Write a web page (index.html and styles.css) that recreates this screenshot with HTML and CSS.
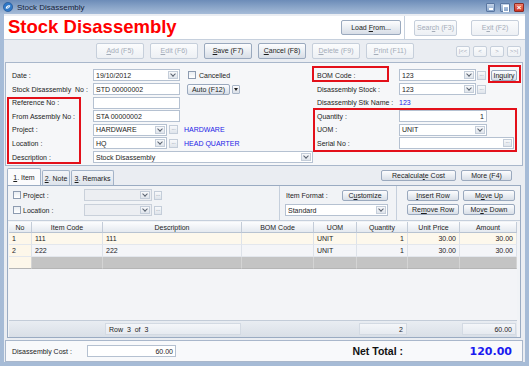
FILE: index.html
```html
<!DOCTYPE html>
<html lang="en">
<head>
    <meta charset="UTF-8">
    <title>Stock Disassembly</title>
    <link rel="stylesheet" href="styles.css">
</head>
<body>
<div class="window">
    <div class="titlebar">
        <svg class="app-icon" viewBox="0 0 10 10">
            <circle cx="5" cy="5" r="4.6" fill="#2f78c8" stroke="#1d4f8e" stroke-width="0.6"/>
            <path d="M2.6 6.4 C3.2 3 6.8 2.6 7.4 4.2 C6.2 3.6 4.4 4.2 4.2 6.2 Z" fill="#fff"/>
            <path d="M7.4 3.6 C6.8 7 3.2 7.4 2.6 5.8 C3.8 6.4 5.6 5.8 5.8 3.8 Z" fill="#cfe4fa"/>
        </svg>
        <span class="title-text">Stock Disassembly</span>
        <div class="win-btns">
            <span class="wb wb-min"></span>
            <span class="wb wb-max"></span>
            <span class="wb wb-close"></span>
        </div>
    </div>

    <div class="client">
        <header class="banner">
            <h1>Stock Disassembly</h1>
            <div class="banner-main">
                <button class="btn btn-load">Load <u>F</u>rom...</button>
            </div>
            <div class="banner-side">
                <button class="btn dis w43">Sear<u>c</u>h (F3)</button>
                <button class="btn dis w48">E<u>x</u>it (F2)</button>
            </div>
        </header>

        <div class="toolbar">
            <button class="btn dis tb"><u>A</u>dd (F5)</button>
            <button class="btn dis tb"><u>E</u>dit (F6)</button>
            <button class="btn tb"><u>S</u>ave (F7)</button>
            <button class="btn tb"><u>C</u>ancel (F8)</button>
            <button class="btn dis tb"><u>D</u>elete (F9)</button>
            <button class="btn dis tb"><u>P</u>rint (F11)</button>
            <div class="nav">
                <button class="btn dis nb">|&lt;&lt;</button>
                <button class="btn dis nb">&lt;</button>
                <button class="btn dis nb">&gt;</button>
                <button class="btn dis nb">&gt;&gt;|</button>
            </div>
        </div>

        <section class="form-panel">
            <div class="lbl">Date :</div>
            <div class="cell">
                <div class="inp w87">19/10/2012<span class="dd"></span></div>
                <span class="chk ml8"></span><span class="ml3">Cancelled</span>
            </div>
            <div class="lbl lbl-r">BOM Code :</div>
            <div class="cell">
                <div class="inp w77">123<span class="dd"></span></div>
                <span class="ell ml1">...</span>
                <button class="btn small inquiry">In<u>q</u>uiry</button>
            </div>

            <div class="lbl">Stock Disassembly &nbsp;No :</div>
            <div class="cell">
                <div class="inp w87">STD 00000002</div>
                <button class="btn small auto">Auto (F12)</button>
                <span class="drop-btn"></span>
            </div>
            <div class="lbl lbl-r">Disassembly Stock :</div>
            <div class="cell">
                <div class="inp w77">123<span class="dd"></span></div>
                <span class="ell ml1">...</span>
            </div>

            <div class="lbl">Reference No :</div>
            <div class="cell"><div class="inp w87"></div></div>
            <div class="lbl lbl-r">Disassembly Stk Name :</div>
            <div class="cell"><span class="link">123</span></div>

            <div class="lbl">From Assembly No :</div>
            <div class="cell"><div class="inp w87">STA 00000002</div></div>
            <div class="lbl lbl-r">Quantity :</div>
            <div class="cell"><div class="inp w88 num">1</div></div>

            <div class="lbl">Project :</div>
            <div class="cell">
                <div class="inp w74">HARDWARE<span class="dd"></span></div>
                <span class="ell ml2">...</span>
                <span class="link ml6">HARDWARE</span>
            </div>
            <div class="lbl lbl-r">UOM :</div>
            <div class="cell"><div class="inp w88">UNIT<span class="dd"></span></div></div>

            <div class="lbl">Location :</div>
            <div class="cell">
                <div class="inp w74">HQ<span class="dd"></span></div>
                <span class="ell ml2">...</span>
                <span class="link ml6">HEAD QUARTER</span>
            </div>
            <div class="lbl lbl-r">Serial No :</div>
            <div class="cell"><div class="inp w115"><span class="ell in-ell">...</span></div></div>

            <div class="lbl">Description :</div>
            <div class="cell"><div class="inp w220">Stock Disassembly<span class="dd"></span></div></div>

            <!-- annotation boxes drawn over the form -->
            <div class="mark mark-left"></div>
            <div class="mark mark-bom"></div>
            <div class="mark mark-inquiry"></div>
            <div class="mark mark-qty"></div>
        </section>

        <div class="tabstrip">
            <div class="tab active"><span><u>1</u>. Item</span></div>
            <div class="tab t-note"><span><u>2</u>. Note</span></div>
            <div class="tab t-rem"><span><u>3</u>. Remarks</span></div>
            <button class="btn small recalc">Recalcula<u>t</u>e Cost</button>
            <button class="btn small more">More (F4)</button>
        </div>

        <section class="tab-panel">
            <div class="filters">
                <div class="fsec fsec-left">
                    <div class="frow">
                        <span class="chk"></span><span class="flbl">Project :</span>
                        <div class="inp off w68"><span class="dd"></span></div>
                        <span class="ell ml2">...</span>
                    </div>
                    <div class="frow">
                        <span class="chk"></span><span class="flbl">Location :</span>
                        <div class="inp off w68"><span class="dd"></span></div>
                        <span class="ell ml2">...</span>
                    </div>
                </div>
                <div class="fsec fsec-mid">
                    <div class="frow">
                        <span class="ml1">Item Format :</span>
                        <button class="btn small custom">C<u>u</u>stomize</button>
                    </div>
                    <div class="frow">
                        <div class="inp w104">Standard<span class="dd"></span></div>
                    </div>
                </div>
                <div class="fsec fsec-right">
                    <button class="btn small rowbtn"><u>I</u>nsert Row</button>
                    <button class="btn small rowbtn">M<u>o</u>ve Up</button>
                    <button class="btn small rowbtn">Re<u>m</u>ove Row</button>
                    <button class="btn small rowbtn">Mo<u>v</u>e Down</button>
                </div>
            </div>

            <div class="grid">
                <div class="grow ghead">
                    <span>No</span><span>Item Code</span><span>Description</span><span>BOM Code</span>
                    <span>UOM</span><span>Quantity</span><span>Unit Price</span><span>Amount</span>
                </div>
                <div class="grow r-focus">
                    <span>1</span><span>111</span><span>111</span><span></span>
                    <span>UNIT</span><span class="num">1</span><span class="num">30.00</span><span class="num">30.00</span>
                </div>
                <div class="grow">
                    <span>2</span><span>222</span><span>222</span><span></span>
                    <span>UNIT</span><span class="num">1</span><span class="num">30.00</span><span class="num">30.00</span>
                </div>
                <div class="grow r-new">
                    <span></span><span></span><span></span><span></span>
                    <span></span><span></span><span></span><span></span>
                </div>
                <div class="gbody"></div>
                <div class="grow gfoot">
                    <span></span><span></span><span class="fc">Row &nbsp;3 &nbsp;of &nbsp;3</span><span></span>
                    <span></span><span class="fc num">2</span><span></span><span class="fc num">60.00</span>
                </div>
            </div>
        </section>

        <footer class="totals">
            <span class="tot-lbl">Disassembly Cost :</span>
            <div class="inp w89 num">60.00</div>
            <span class="net-lbl">Net Total :</span>
            <span class="net-val">120.00</span>
        </footer>
    </div>
</div>
</body>
</html>
```

FILE: styles.css
```css
* {
    box-sizing: border-box;
}
body {
    margin: 0;
    width: 529px;
    height: 366px;
    overflow: hidden;
    font-family: "Liberation Sans", Arial, sans-serif;
    font-size: 7px;
    color: #1c1c1c;
    background: #9fb4d0;
}
u {
    text-decoration: underline;
}
.window {
    height: 366px;
    display: flex;
    flex-direction: column;
    padding: 0 4px 4px 4px;
    background: linear-gradient(#6c8cb8, #a6bcd8 14px, #a6bbd6);
}

/* title bar */
.titlebar {
    height: 14px;
    display: flex;
    align-items: center;
}
.app-icon {
    width: 10px;
    height: 10px;
    margin-left: -1px;
}
.title-text {
    margin-left: 4px;
    font-size: 8px;
    color: #14213a;
}
.win-btns {
    margin-left: auto;
    margin-right: 1px;
    display: flex;
    gap: 4px;
}
.wb {
    width: 10px;
    height: 9px;
    border: 1px solid #5a77a2;
    border-radius: 1px;
    background: linear-gradient(#c3d3e8, #8aa6cb);
    position: relative;
}
.wb-min {
    width: 9px;
    margin-right: 1px;
}
.wb-min::after {
    content: '';
    position: absolute;
    left: 2px;
    bottom: 1px;
    width: 4px;
    height: 2px;
    background: #fff;
}
.wb-max::after {
    content: '';
    position: absolute;
    left: 2px;
    top: 1px;
    width: 4px;
    height: 4px;
    border: 1px solid #fff;
    border-top-width: 2px;
}
.wb-close {
    border-color: #8e2a22;
    background: linear-gradient(#f0826f, #cf3423);
    color: #fff;
    font-size: 8px;
    font-weight: bold;
    line-height: 7px;
    text-align: center;
}
.wb-close::after {
    content: '×';
}

/* client area */
.client {
    flex: 1;
    display: flex;
    flex-direction: column;
    background: #eaedf2;
}
.banner {
    margin-top: 2px;
    height: 24px;
    display: flex;
    background: #fff;
    border-bottom: 1px solid #c6d0dd;
}
.banner h1 {
    margin: 0;
    padding-left: 4px;
    align-self: center;
    font-size: 18.5px;
    line-height: 1;
    font-weight: bold;
    color: #ff0000;
}
.banner-main {
    flex: 1;
    display: flex;
    align-items: center;
    justify-content: flex-end;
    padding-right: 3px;
}
.banner-side {
    width: 121px;
    display: flex;
    align-items: center;
    gap: 14px;
    padding-left: 9px;
    border-left: 1px solid #c6d0dd;
}

/* buttons */
.btn {
    display: block;
    height: 16px;
    padding: 0;
    border: 1px solid #9aa9be;
    border-radius: 2px;
    background: linear-gradient(#fdfdfe, #eaeef3 50%, #d8dee7);
    font-family: "Liberation Sans", Arial, sans-serif;
    font-size: 7px;
    line-height: 14px;
    text-align: center;
    color: #1c1c1c;
    white-space: nowrap;
    overflow: hidden;
    flex-shrink: 0;
}
.btn.dis {
    color: #a4acb8;
    border-color: #c6cfdb;
    background: linear-gradient(#fbfcfd, #edf0f4);
}
.btn.small {
    height: 11px;
    line-height: 9px;
}
.btn-load {
    width: 60px;
    height: 15px;
    line-height: 13px;
}
.w43 { width: 43px; }
.w48 { width: 48px; }

.toolbar {
    height: 22px;
    display: flex;
    gap: 6px;
    padding: 3px 4px 0 92px;
}
.tb {
    width: 48px;
}
.nav {
    margin-left: auto;
    margin-top: 3px;
    display: flex;
    gap: 3px;
}
.nb {
    width: 14px;
    height: 11px;
    line-height: 9px;
    font-size: 6px;
}

/* header form */
.form-panel {
    position: relative;
    height: 104px;
    margin: 0 2px 0 1px;
    padding-top: 5px;
    border: 1px solid #a9b7cb;
    background: #f6f7f9;
    display: grid;
    grid-template-columns: 87px 220px 86px 1fr;
    grid-template-rows: 14px 14px 13px 14px 13px 14px 14px;
}
.lbl {
    display: flex;
    align-items: center;
    padding-left: 6px;
    white-space: nowrap;
}
.lbl-r {
    padding-left: 4px;
}
.cell {
    display: flex;
    align-items: center;
}
.inp {
    height: 12px;
    display: flex;
    align-items: center;
    padding-left: 2px;
    border: 1px solid #b5c1d1;
    background: #fff;
    white-space: nowrap;
}
.inp.num {
    justify-content: flex-end;
    padding-right: 2px;
}
.inp.off {
    background: #eceef2;
    border-color: #c9d0da;
}
.w68 { width: 68px; }
.w74 { width: 74px; }
.w77 { width: 77px; }
.w87 { width: 87px; }
.w88 { width: 88px; }
.w89 { width: 89px; }
.w104 { width: 104px; }
.w115 { width: 115px; }
.w220 { width: 220px; }
.ml1 { margin-left: 1px; }
.ml2 { margin-left: 2px; }
.ml3 { margin-left: 3px; }
.ml6 { margin-left: 6px; }
.ml8 { margin-left: 8px; }

.dd {
    position: relative;
    width: 10px;
    height: 8px;
    margin-left: auto;
    margin-right: 1px;
    border: 1px solid #c4cdd9;
    background: linear-gradient(#f8f9fb, #dfe4eb);
}
.dd::after {
    content: '';
    position: absolute;
    left: 2px;
    top: 0;
    width: 3px;
    height: 3px;
    border-right: 1px solid #5a6270;
    border-bottom: 1px solid #5a6270;
    transform: rotate(45deg);
}
.ell {
    width: 9px;
    height: 9px;
    display: flex;
    align-items: flex-end;
    justify-content: center;
    padding-bottom: 2px;
    border: 1px solid #c4cdd9;
    background: linear-gradient(#f8f9fb, #dfe4eb);
    font-size: 5px;
    line-height: 1;
    color: #6b7380;
}
.in-ell {
    margin-left: auto;
    margin-right: 1px;
    height: 8px;
}
.chk {
    width: 8px;
    height: 8px;
    border: 1px solid #8d9bb0;
    background: linear-gradient(#e9edf2, #fff);
}
.link {
    color: #2323e6;
}
.inquiry {
    width: 26px;
    margin-left: 5px;
}
.auto {
    width: 43px;
    margin-left: 7px;
}
.drop-btn {
    position: relative;
    width: 8px;
    height: 9px;
    margin-left: 2px;
    border: 1px solid #a8b5c7;
    border-radius: 1px;
    background: linear-gradient(#fdfdfe, #d9dfe7);
}
.drop-btn::after {
    content: '';
    position: absolute;
    left: 1px;
    top: 2px;
    border-left: 2px solid transparent;
    border-right: 2px solid transparent;
    border-top: 3px solid #222;
}

/* red annotation boxes */
.mark {
    position: absolute;
    border: 2px solid #e3101a;
}
.mark-left {
    left: 1px;
    top: 34px;
    width: 74px;
    height: 67px;
}
.mark-bom {
    left: 306px;
    top: 3px;
    width: 77px;
    height: 16px;
}
.mark-inquiry {
    left: 482px;
    top: 2px;
    width: 33px;
    height: 18px;
}
.mark-qty {
    left: 307px;
    top: 45px;
    width: 204px;
    height: 44px;
}

/* tabs */
.tabstrip {
    height: 19px;
    display: flex;
    align-items: flex-end;
    padding: 0 13px 0 3px;
}
.tab {
    height: 15px;
    display: flex;
    align-items: center;
    justify-content: center;
    margin-right: 1px;
    border: 1px solid #a3b3c8;
    border-bottom: none;
    border-radius: 2px 2px 0 0;
    background: linear-gradient(#f3f5f8, #dde3eb);
}
.tab.active {
    width: 34px;
    height: 17px;
    background: #fbfbfc;
}
.t-note {
    width: 28px;
}
.t-rem {
    width: 43px;
}
.recalc {
    width: 75px;
    margin-left: auto;
    margin-bottom: 4px;
}
.more {
    width: 51px;
    margin-left: 5px;
    margin-bottom: 4px;
}

.tab-panel {
    height: 153px;
    margin: 0 4px 0 3px;
    display: flex;
    flex-direction: column;
    border: 1px solid #9aabc2;
    background: #f1f3f6;
}
.filters {
    height: 35px;
    display: flex;
    border-bottom: 1px solid #c5cfdc;
}
.fsec {
    display: flex;
    flex-direction: column;
    gap: 3px;
    padding-top: 3px;
}
.fsec-left {
    width: 272px;
    padding-left: 5px;
    border-right: 1px solid #c5cfdc;
}
.fsec-mid {
    width: 117px;
    padding-left: 5px;
    padding-right: 8px;
    border-right: 1px solid #c5cfdc;
}
.fsec-right {
    flex: 1;
    display: grid;
    grid-template-columns: 52px 52px;
    column-gap: 4px;
    row-gap: 3px;
    align-content: start;
    padding: 4px 0 0 10px;
}
.frow {
    height: 12px;
    display: flex;
    align-items: center;
}
.flbl {
    width: 61px;
    margin-left: 2px;
}
.fsec-left .ell {
    width: 8px;
}
.custom {
    width: 46px;
    margin-left: auto;
}

/* item grid */
.grid {
    flex: 1;
    margin: 1px 3px 0 1px;
    display: flex;
    flex-direction: column;
}
.grow {
    height: 12px;
    display: grid;
    grid-template-columns: 23px 71px 139px 72px 43px 51px 52px 57px;
    background: #f4f5f8;
}
.grow span {
    display: flex;
    align-items: center;
    padding: 0 3px;
    border-right: 1px solid #dde2e9;
    border-bottom: 1px solid #e3e7ed;
    white-space: nowrap;
}
.grow span:first-child {
    background: #fdf7ea;
}
.grow .num {
    justify-content: flex-end;
}
.ghead {
    height: 11px;
    background: linear-gradient(#fcfdfe, #e2e7ee);
}
.ghead span {
    justify-content: center;
    border-right-color: #c3ccd8;
    border-bottom-color: #b8c3d1;
}
.ghead span:first-child {
    background: none;
}
.r-focus {
    background: #fdf8ec;
}
.r-new {
    background: #c4c4c4;
}
.r-new span {
    border-right-color: #d4d4d4;
    border-bottom-color: #b5b5b5;
}
.gbody {
    flex: 1;
    background: #f3f4f7;
}
.gfoot {
    height: 17px;
    background: linear-gradient(#e9edf2, #d9dfe7);
    border-top: 1px solid #c3ccd8;
}
.gfoot span,
.gfoot span:first-child {
    background: none;
    border: none;
}
.gfoot .fc {
    margin: 2px 1px 2px 2px;
    border: 1px solid #d3dae3;
    background: linear-gradient(#f4f6f9, #e6eaf0);
}

/* totals */
.totals {
    height: 22px;
    margin: 2px 2px 0 1px;
    display: flex;
    align-items: center;
    padding: 0 10px 0 6px;
    border: 1px solid #a9b7cb;
    background: #f8f9fb;
}
.tot-lbl {
    width: 75px;
}
.net-lbl {
    margin-left: auto;
    margin-right: 9px;
    font-size: 10.5px;
    font-weight: bold;
    color: #111;
}
.net-val {
    width: 100px;
    text-align: right;
    font-family: "DejaVu Sans", sans-serif;
    font-size: 11px;
    font-weight: bold;
    color: #1a1af0;
}
```
